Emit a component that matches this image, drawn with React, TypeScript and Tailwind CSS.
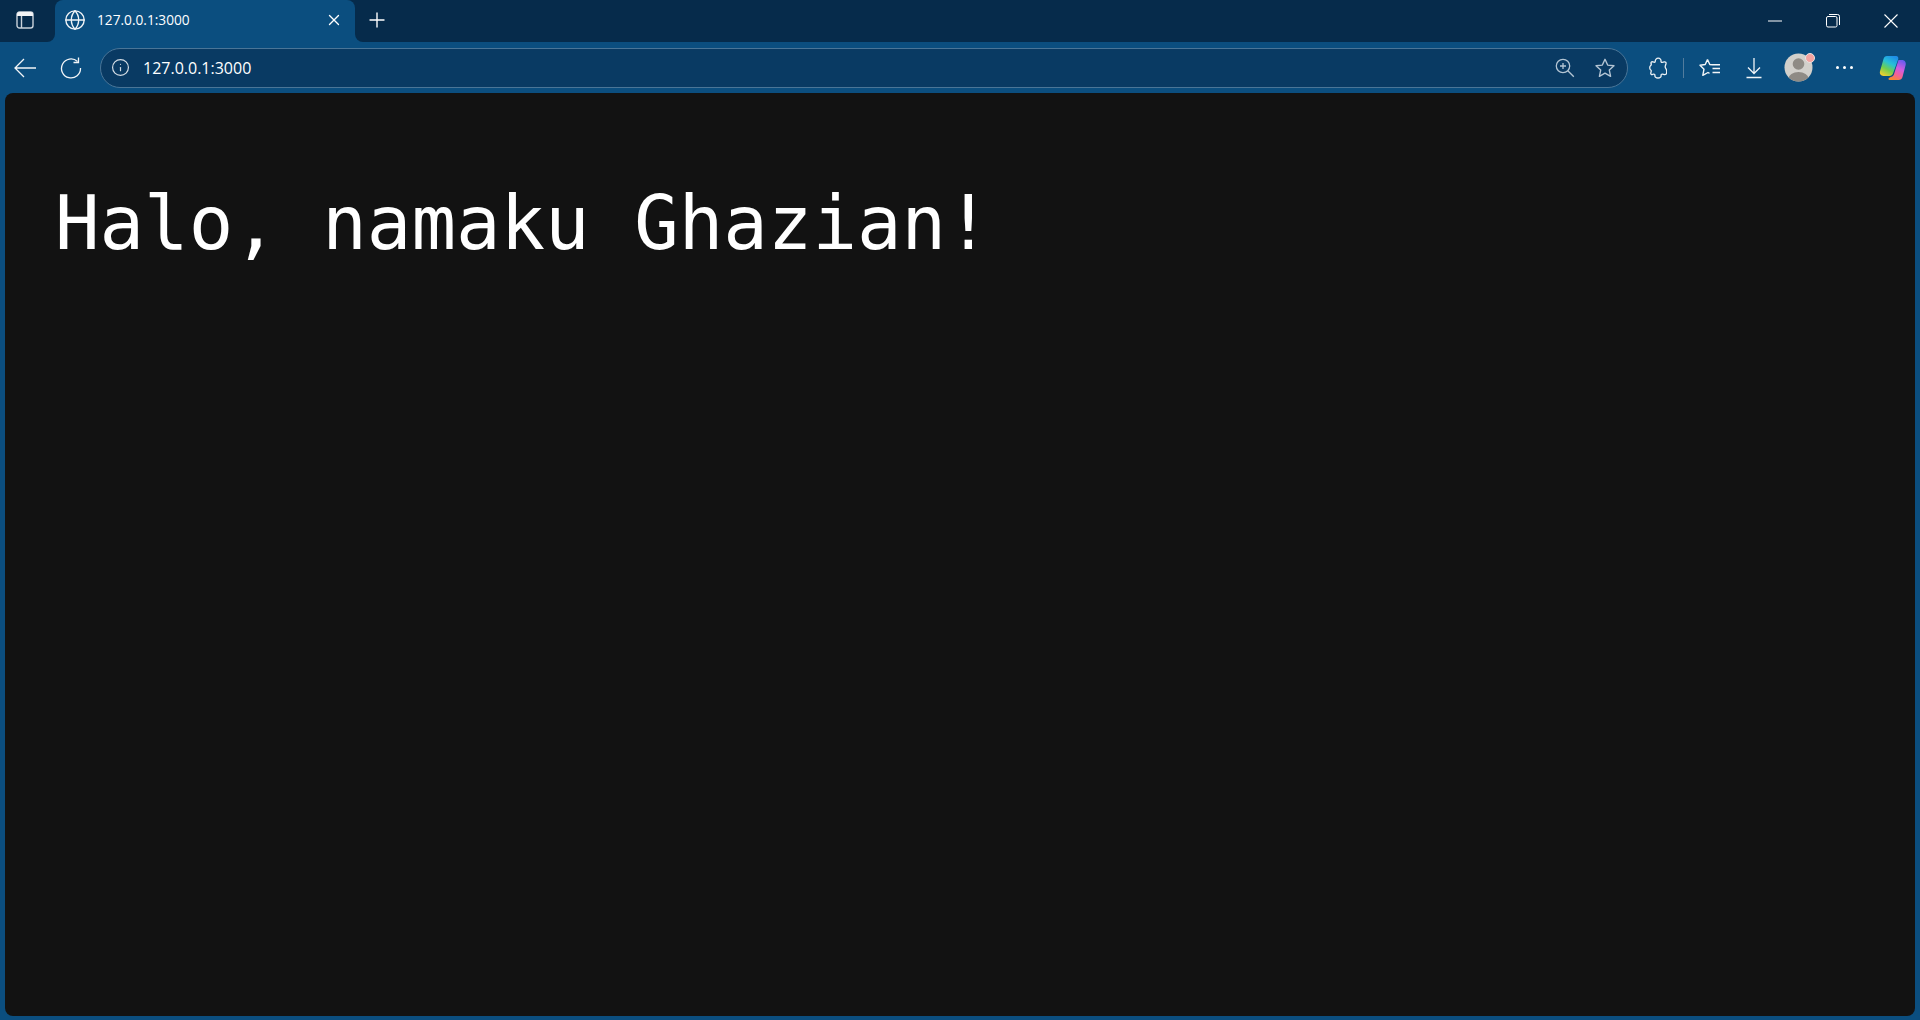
import { Globe, Info, Plus, X } from "lucide-react";

const UI_FONT = "font-['Open_Sans',sans-serif]";

function SidebarIcon() {
  return (
    <svg width="18" height="18" viewBox="0 0 18 18" fill="none" stroke="#c9d2da" strokeWidth="1.4">
      <rect x="1" y="1" width="16" height="16" rx="2.5" />
      <path d="M5.500 4.500V17" />
      <path d="M1 3.500a2.500 2.500 0 0 1 2.500-2.500h11a2.500 2.500 0 0 1 2.500 2.500v1.500H1z" fill="#f2f4f6" stroke="none" />
    </svg>
  );
}

function WindowButtons() {
  return (
    <div className="flex items-center">
      <div className="w-[58px] h-[40px] flex items-center justify-center">
        <svg width="14" height="2" viewBox="0 0 14 2">
          <path d="M0 1h14" stroke="#fff" strokeWidth="1" />
        </svg>
      </div>
      <div className="w-[58px] h-[42px] flex items-center justify-center">
        <svg width="14" height="14" viewBox="0 0 14 14" fill="none" stroke="#fff" strokeWidth="1">
          <rect x="0.5" y="2.500" width="10.500" height="10.500" rx="1.500" />
          <path d="M3 .5h8.500a2 2 0 0 1 2 2V11" />
        </svg>
      </div>
      <div className="w-[58px] h-[42px] flex items-center justify-center">
        <svg width="14" height="14" viewBox="0 0 14 14" stroke="#fff" strokeWidth="1.100">
          <path d="M.5.5l13 13M13.500.5l-13 13" />
        </svg>
      </div>
    </div>
  );
}

function TabStrip() {
  return (
    <div className="flex h-[42px] shrink-0 bg-[#0b4e7f]">
      <div className="w-[55px] bg-[#062b4b] rounded-br-lg flex items-center justify-center pr-[5px] pb-[2px]">
        <SidebarIcon />
      </div>
      <div className="w-[300px] bg-[#062b4b]">
        <div className="h-full bg-[#0b4e7f] rounded-t-lg flex items-center pl-[9px] pr-[12px] pb-[2px]">
          <Globe size={22} strokeWidth={1.5} color="#f0f3f6" />
          <span className={`ml-[11px] text-[13.7px] text-white ${UI_FONT}`}>127.0.0.1:3000</span>
          <X size={18} strokeWidth={1.8} color="#fff" className="ml-auto" />
        </div>
      </div>
      <div className="flex-1 bg-[#062b4b] rounded-bl-lg flex items-center justify-between">
        <Plus size={24} strokeWidth={1.4} color="#fff" className="ml-[10px] mb-[2px]" />
        <WindowButtons />
      </div>
    </div>
  );
}

function AddressBar() {
  return (
    <div className="w-[1528px] h-[40px] ml-[18px] rounded-full border border-[#4a7597] bg-[#093a63] flex items-center pl-[10px] pr-[11px]">
      <Info size={19} strokeWidth={1.5} color="#d3dce4" />
      <span className={`ml-[13px] text-[16px] text-white ${UI_FONT}`}>127.0.0.1:3000</span>
      <svg className="ml-auto" width="20" height="20" viewBox="0 0 20 20" fill="none" stroke="#b4c5d4" strokeWidth="1.300">
        <circle cx="8" cy="8" r="6.700" />
        <path d="M12.800 12.800l6 6M8 5v6M5 8h6" />
      </svg>
      <svg className="ml-[19px]" width="22" height="22" viewBox="0 0 24 24" fill="none" stroke="#b4c5d4" strokeWidth="1.500" strokeLinejoin="round">
        <path d="M12 2.500l2.900 6.300 6.900.8-5.100 4.700 1.400 6.800-6.100-3.400-6.100 3.400 1.400-6.800-5.100-4.700 6.900-.8z" />
      </svg>
    </div>
  );
}

function Avatar() {
  return (
    <div className="w-[29px] h-[29px] relative">
      <svg width="29" height="29" viewBox="0 0 29 29">
        <defs>
          <clipPath id="avatar-clip">
            <circle cx="14.500" cy="14.500" r="14" />
          </clipPath>
        </defs>
        <circle cx="14.500" cy="14.500" r="14" fill="#d2d0cb" />
        <g clipPath="url(#avatar-clip)" fill="#8f8b85">
          <circle cx="14.500" cy="11" r="5.800" />
          <ellipse cx="14.500" cy="25.500" rx="10" ry="6.500" />
        </g>
      </svg>
      <div className="absolute right-[-2px] top-0 w-[10px] h-[10px] rounded-full bg-[#f4a3a0] border border-[#e9e4e2]" />
    </div>
  );
}

function CopilotLogo() {
  return (
    <svg width="28" height="26" viewBox="0 0 28 26">
      <defs>
        <linearGradient id="copilot-a" x1="0.7" y1="0" x2="0.2" y2="1">
          <stop offset="0" stopColor="#1f8fe8" />
          <stop offset="0.35" stopColor="#27c0d8" />
          <stop offset="0.65" stopColor="#6fcf4f" />
          <stop offset="1" stopColor="#f5d02e" />
        </linearGradient>
        <linearGradient id="copilot-b" x1="0.7" y1="0" x2="0.3" y2="1">
          <stop offset="0" stopColor="#6a5cf0" />
          <stop offset="0.4" stopColor="#d05ce0" />
          <stop offset="0.7" stopColor="#f4609a" />
          <stop offset="1" stopColor="#f7892f" />
        </linearGradient>
      </defs>
      <path d="M8 1h9c1.800 0 2.800 1.600 2.200 3.300L14 18.500c-.6 1.500-1.800 2.500-3.400 2.500H4.500C1.800 21 .3 18.700 1 16.300L4.500 4C5 2.200 6.300 1 8 1z" fill="url(#copilot-a)" />
      <path d="M19.500 5H23c2.700 0 4.300 2.300 3.700 4.800l-3.200 12.200c-.5 1.900-2 3-3.900 3H11c-1.200 0-1.800-.8-1.400-1.800l2-1.300c1.500 0 2.700-1 3.300-2.500L19.500 5z" fill="url(#copilot-b)" />
    </svg>
  );
}

function ToolbarActions() {
  return (
    <div className="flex items-center ml-[21px]">
      <svg width="18" height="22" viewBox="0 0 18 22" fill="none" stroke="#eef2f5" strokeWidth="1.300" strokeLinejoin="round">
        <path d="M6.200 4.500C6.200 2.500 7.500 1.200 9.200 1.200C11 1.200 12.300 2.500 12 4.500C12 5.200 12.500 5.500 13.200 5.300L15.300 4.900C16.500 4.700 17.300 5.500 17 6.700L16.300 9C16 10 16.300 11 17 11.800C18 13 17.800 14.500 17.600 16C17.400 17.200 16.500 17.800 15.500 17.600L13.500 17.200C12.500 17 12 17.500 12.100 18.300C12.300 20 11 21 9 21C7 21 5.700 20 5.900 18.300C6 17.500 5.500 17 4.500 17.200L3.500 17.500C2.300 17.800 1.500 17 1.800 15.800L2.200 14.300C2.400 13.500 2 13 1.500 12.700C.5 12 .5 9.500 1.500 8.700C2 8.300 2.400 7.800 2.200 7L2 6.300C1.800 5.200 2.700 4.500 3.700 4.800L5 5.200C5.700 5.400 6.200 5.200 6.200 4.500Z" />
      </svg>
      <div className="w-px h-[20px] bg-[#527c9d] ml-[16px]" />
      <svg className="ml-[15px]" width="22" height="20" viewBox="0 0 22 20" fill="none" stroke="#f4f6f8" strokeWidth="1.400" strokeLinejoin="round">
        <path d="M8.500 1.500L10.800 6.500L13 6.800M8.500 1.500L6.200 6.500L1 7.200L5 11.200L3.800 17.300L9 14.500L10.500 15.300" />
        <path d="M13 6.800h8M13.500 10.500h7.500M13.500 14.500h7.500" />
      </svg>
      <svg className="ml-[24px]" width="18" height="22" viewBox="0 0 18 22" fill="none" stroke="#f2f5f8" strokeWidth="1.300">
        <path d="M9 1v15M3 10.500l6 6 6-6M1.500 20.500h15" />
      </svg>
      <div className="ml-[21px]">
        <Avatar />
      </div>
      <div className="ml-[23px] flex gap-[4px]">
        <div className="w-[3px] h-[3px] rounded-full bg-white" />
        <div className="w-[3px] h-[3px] rounded-full bg-white" />
        <div className="w-[3px] h-[3px] rounded-full bg-white" />
      </div>
      <div className="ml-[26px]">
        <CopilotLogo />
      </div>
    </div>
  );
}

function Toolbar() {
  return (
    <div className="h-[51px] shrink-0 bg-[#0b4e7f] flex items-center pl-[14px]">
      <svg width="22" height="20" viewBox="0 0 22 20" fill="none" stroke="#f2f5f8" strokeWidth="1.300">
        <path d="M1 10h21M10 1l-9 9 9 9" />
      </svg>
      <svg className="ml-[24px]" width="22" height="22" viewBox="0 0 22 22" fill="none" stroke="#f2f5f8" strokeWidth="1.300">
        <path d="M17.500 4.500A9.500 9.500 0 1 0 20.500 11" />
        <path d="M18.500 0.500v5h-5" />
      </svg>
      <AddressBar />
      <ToolbarActions />
    </div>
  );
}

export default function App() {
  return (
    <div className="h-[1020px] w-[1920px] flex flex-col bg-[#0b4e7f] overflow-hidden">
      <TabStrip />
      <Toolbar />
      <div className="flex-1 mx-[5px] mb-[4px] bg-[#121212] rounded-lg px-[50px] pt-[97px]">
        <h1 className="text-[74px] leading-[66px] text-white font-['DejaVu_Sans_Mono',monospace] font-normal whitespace-nowrap">
          Halo, namaku Ghazian!
        </h1>
      </div>
    </div>
  );
}
